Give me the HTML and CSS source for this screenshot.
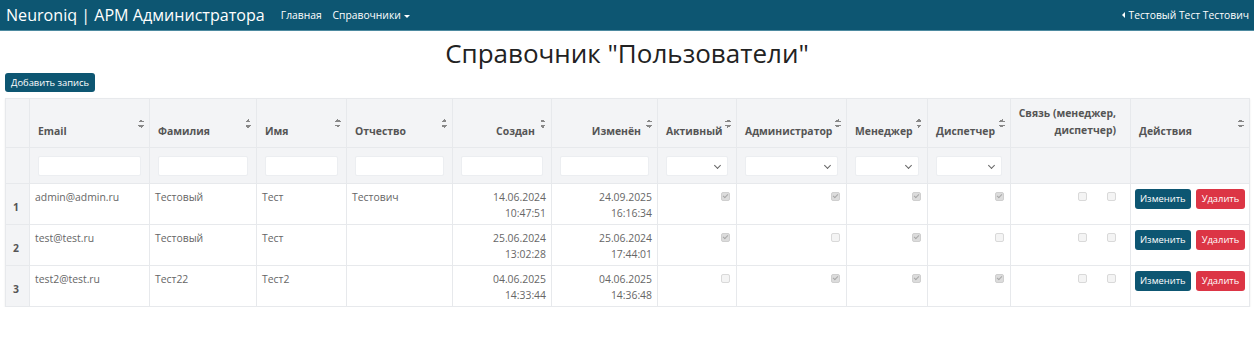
FILE: index.html
```html
<!DOCTYPE html>
<html lang="ru">
<head>
<meta charset="utf-8">
<title>Справочник "Пользователи"</title>
<link rel="stylesheet" href="styles.css">
</head>
<body>
<nav class="navbar">
  <div class="nav-left">
    <span class="brand">Neuroniq | АРМ Администратора</span>
    <span class="nav-link">Главная</span>
    <span class="nav-link">Справочники <span class="caret"></span></span>
  </div>
  <div class="nav-right"><span class="lcaret"></span>Тестовый Тест Тестович</div>
</nav>
<main class="content">
  <h1 class="title">Справочник "Пользователи"</h1>
  <button class="btn btn-primary btn-add">Добавить запись</button>
  <table class="grid">
    <colgroup>
      <col style="width:24px"><col style="width:120px"><col style="width:107px"><col style="width:90px"><col style="width:106px"><col style="width:99px"><col style="width:106px"><col style="width:79px"><col style="width:110px"><col style="width:81px"><col style="width:83px"><col style="width:120px"><col style="width:119px">
    </colgroup>
    <thead>
      <tr class="head">
        <th class="num"></th>
        <th class="sort">Email</th>
        <th class="sort">Фамилия</th>
        <th class="sort">Имя</th>
        <th class="sort">Отчество</th>
        <th class="sort right"><span class="lbl">Создан</span></th>
        <th class="sort right"><span class="lbl">Изменён</span></th>
        <th class="sort">Активный</th>
        <th class="sort">Администратор</th>
        <th class="sort">Менеджер</th>
        <th class="sort">Диспетчер</th>
        <th class="right link">Связь (менеджер,<br>диспетчер)</th>
        <th class="sort">Действия</th>
      </tr>
      <tr class="filters">
        <th class="num"></th>
        <th><input class="finput" type="text"></th>
        <th><input class="finput" type="text"></th>
        <th><input class="finput" type="text"></th>
        <th><input class="finput" type="text"></th>
        <th><input class="finput" type="text"></th>
        <th><input class="finput" type="text"></th>
        <th><span class="fselect"></span></th>
        <th><span class="fselect"></span></th>
        <th><span class="fselect"></span></th>
        <th><span class="fselect"></span></th>
        <th></th>
        <th></th>
      </tr>
    </thead>
    <tbody>
      <tr>
        <td class="num">1</td>
        <td>admin@admin.ru</td>
        <td>Тестовый</td>
        <td>Тест</td>
        <td>Тестович</td>
        <td class="right">14.06.2024<br>10:47:51</td>
        <td class="right">24.09.2025<br>16:16:34</td>
        <td class="right"><span class="cb on"></span></td>
        <td class="right"><span class="cb on"></span></td>
        <td class="right"><span class="cb on"></span></td>
        <td class="right"><span class="cb on"></span></td>
        <td class="right"><span class="cb"></span><span class="cb gap"></span></td>
        <td class="actions"><button class="btn btn-primary">Изменить</button><button class="btn btn-danger">Удалить</button></td>
      </tr>
      <tr>
        <td class="num">2</td>
        <td>test@test.ru</td>
        <td>Тестовый</td>
        <td>Тест</td>
        <td></td>
        <td class="right">25.06.2024<br>13:02:28</td>
        <td class="right">25.06.2024<br>17:44:01</td>
        <td class="right"><span class="cb on"></span></td>
        <td class="right"><span class="cb"></span></td>
        <td class="right"><span class="cb on"></span></td>
        <td class="right"><span class="cb"></span></td>
        <td class="right"><span class="cb"></span><span class="cb gap"></span></td>
        <td class="actions"><button class="btn btn-primary">Изменить</button><button class="btn btn-danger">Удалить</button></td>
      </tr>
      <tr>
        <td class="num">3</td>
        <td>test2@test.ru</td>
        <td>Тест22</td>
        <td>Тест2</td>
        <td></td>
        <td class="right">04.06.2025<br>14:33:44</td>
        <td class="right">04.06.2025<br>14:36:48</td>
        <td class="right"><span class="cb"></span></td>
        <td class="right"><span class="cb on"></span></td>
        <td class="right"><span class="cb on"></span></td>
        <td class="right"><span class="cb on"></span></td>
        <td class="right"><span class="cb"></span><span class="cb gap"></span></td>
        <td class="actions"><button class="btn btn-primary">Изменить</button><button class="btn btn-danger">Удалить</button></td>
      </tr>
    </tbody>
  </table>
</main>
</body>
</html>
```
FILE: styles.css
```css
* { box-sizing: border-box; }
body {
  margin: 0;
  font-family: "Open Sans", "Noto Sans", sans-serif;
  color: #555;
  background: #fff;
}
.navbar {
  height: 31px;
  background: #0d5672;
  border-bottom: 1px solid #4d8aa0;
  display: flex;
  align-items: center;
  justify-content: space-between;
  padding: 0 5px 0 6px;
  color: #fff;
}
.nav-left { display: flex; align-items: center; }
.brand { font-size: 16.1px; margin-right: 16px; }
.nav-link { font-size: 10.3px; margin-right: 11px; }
.caret {
  display: inline-block;
  width: 0; height: 0;
  border-left: 3px solid transparent;
  border-right: 3px solid transparent;
  border-top: 3px solid #fff;
  vertical-align: middle;
  margin-left: 1px;
}
.nav-right { font-size: 10.3px; display: flex; align-items: center; }
.lcaret {
  display: inline-block;
  width: 0; height: 0;
  border-top: 3px solid transparent;
  border-bottom: 3px solid transparent;
  border-right: 3px solid #fff;
  margin-right: 3px;
}
.content { padding: 0 5px; }
.title {
  margin: 4px 0 0;
  text-align: center;
  font-weight: 400;
  font-size: 26px;
  line-height: 36px;
  color: #222;
}
.btn {
  font-family: inherit;
  font-size: 9.4px;
  border: none;
  border-radius: 3px;
  color: #fff;
  padding: 0 5px;
  height: 20px;
  line-height: 20px;
  cursor: pointer;
  vertical-align: top;
}
.btn-primary { background: #0d5672; }
.btn-danger { background: #dc3545; margin-left: 5px; padding: 0 6px; }
.btn-add { display: block; margin-top: 2px; height: 19px; padding: 0 6px; }
.grid {
  margin-top: 6px;
  width: 1244px;
  table-layout: fixed;
  border-collapse: collapse;
  font-size: 10.4px;
  border: 1px solid #e3e5e8;
  box-shadow: 0 1px 2px rgba(0,0,0,0.08);
}
.grid th, .grid td {
  border: 1px solid #e7e9ec;
}
.head th {
  height: 49px;
  background: #f3f4f6;
  font-weight: 700;
  color: #555;
  text-align: left;
  vertical-align: bottom;
  padding: 0 7px 8px 8px;
  position: relative;
  line-height: 16px;
}
.head th.right { text-align: right; padding-right: 16px; }
.head th.link { padding-left: 4px; padding-right: 14px; padding-bottom: 8px; line-height: 17px; }
.head th.sort::after {
  content: "";
  position: absolute;
  right: 5px;
  top: 20px;
  width: 6px;
  height: 9px;
  background:
    linear-gradient(to bottom right, transparent 50%, #888 50%) left top / 3px 3px no-repeat,
    linear-gradient(to bottom left, transparent 50%, #888 50%) right top / 3px 3px no-repeat,
    linear-gradient(to top right, transparent 50%, #888 50%) left bottom / 3px 3px no-repeat,
    linear-gradient(to top left, transparent 50%, #888 50%) right bottom / 3px 3px no-repeat;
}
.filters th {
  height: 36px;
  background: #f3f4f6;
  padding: 0 8px;
  vertical-align: middle;
}
.finput {
  display: block;
  width: 100%;
  height: 20px;
  border: 1px solid #eceef1;
  border-radius: 2px;
  background: #fff;
}
.fselect {
  display: block;
  width: 100%;
  height: 20px;
  border-radius: 2px;
  background: #fff;
  border: 1px solid #eceef1;
  position: relative;
}
.fselect::after {
  content: "";
  position: absolute;
  right: 7px;
  top: 6px;
  width: 4px;
  height: 4px;
  border-right: 1.2px solid #666;
  border-bottom: 1.2px solid #666;
  transform: rotate(45deg);
}
tbody td {
  height: 41px;
  vertical-align: top;
  padding: 5px 6px 0 5px;
  line-height: 16px;
  color: #666;
  background: #fff;
}
tbody td.right { text-align: right; padding-right: 5px; }
td.num, th.num { background: #f3f4f6; }
tbody td.num {
  font-weight: 700;
  vertical-align: middle;
  padding: 6px 0 0 7px;
  color: #555;
}
.cb {
  display: inline-block;
  width: 9px;
  height: 9px;
  border: 1px solid #d9d9d9;
  border-radius: 2px;
  background: #f4f4f4;
  margin-top: 3px;
  margin-right: 1px;
  position: relative;
  vertical-align: top;
}
.cb.gap { margin-left: 19px; margin-right: 9px; }
.cb.on { background: #dcdcdc; border-color: #cfcfcf; }
.cb.on::after {
  content: "";
  position: absolute;
  left: 2px;
  top: 0px;
  width: 2px;
  height: 4px;
  border-right: 1px solid #a8a8a8;
  border-bottom: 1px solid #a8a8a8;
  transform: rotate(45deg);
}
tbody td.actions { padding: 5px 0 0 4px; white-space: nowrap; }
```
